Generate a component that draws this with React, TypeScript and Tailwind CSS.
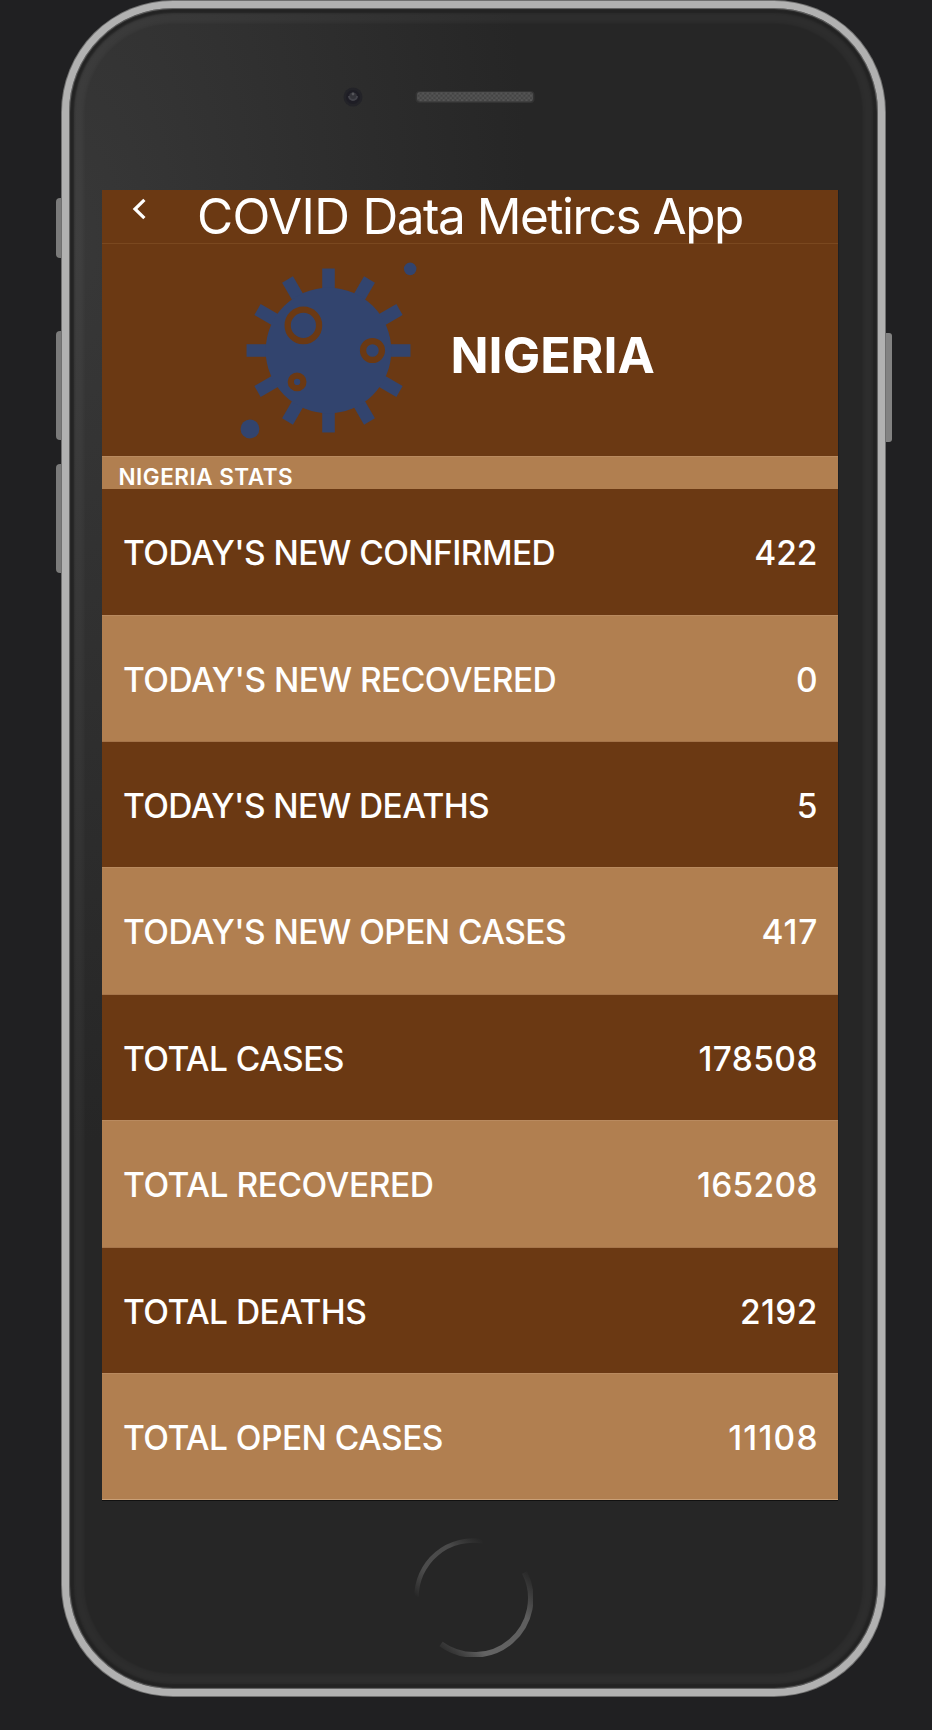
const stats = [
  { label: "TODAY'S NEW CONFIRMED", value: '422', track: 'tracking-[-0.58px]', num: 'tracking-[0px]' },
  { label: "TODAY'S NEW RECOVERED", value: '0', track: 'tracking-[-0.52px]', num: 'tracking-[0px]' },
  { label: "TODAY'S NEW DEATHS", value: '5', track: 'tracking-[-0.6px]', num: 'tracking-[0px]' },
  { label: "TODAY'S NEW OPEN CASES", value: '417', track: 'tracking-[-0.58px]', num: 'tracking-[0.9px] -mr-[0.9px]' },
  { label: 'TOTAL CASES', value: '178508', track: 'tracking-[-0.56px]', num: 'tracking-[0.4px] -mr-[0.4px]' },
  { label: 'TOTAL RECOVERED', value: '165208', track: 'tracking-[-0.45px]', num: 'tracking-[0.3px] -mr-[0.3px]' },
  { label: 'TOTAL DEATHS', value: '2192', track: 'tracking-[-0.54px]', num: 'tracking-[0.4px] -mr-[0.4px]' },
  { label: 'TOTAL OPEN CASES', value: '11108', track: 'tracking-[-0.55px]', num: 'tracking-[1.2px] -mr-[1.2px]' },
];

const spikes = [0, 30, 60, 90, 120, 150, 180, 210, 240, 270, 300, 330];

function Virus() {
  return (
    <svg viewBox="0 0 32 32" className="h-[201px] w-[201px] shrink-0 fill-[#32446e]">
      {spikes.map((a) => (
        <rect key={a} x="15" y="2.95" width="2" height="5" transform={`rotate(${a} 16 16)`} />
      ))}
      <circle cx="16" cy="16" r="10" />
      <circle cx="12" cy="12" r="2.5" fill="none" stroke="#6b3913" />
      <circle cx="23" cy="16" r="1.5" fill="none" stroke="#6b3913" />
      <circle cx="11" cy="21" r="1" fill="none" stroke="#6b3913" />
      <circle cx="29" cy="3" r="1" />
      <circle cx="3.5" cy="28.5" r="1.5" />
    </svg>
  );
}

function Screen() {
  return (
    <main className="flex h-[1310px] w-[736px] flex-col bg-[#6b3913] text-white shadow-[0_1px_0_#111,1px_0_0_#1d2024]">
      <header className="flex h-[54px] items-start border-b border-[#7a481f]">
        <svg viewBox="0 0 14 22" className="mt-[8px] ml-[30px] h-[22px] w-[14px] shrink-0">
          <path d="M12.4 1.8 3 11l9.4 9.2" fill="none" stroke="white" strokeWidth="3.2" />
        </svg>
        <h1 className="ml-[51px] text-[49.5px] leading-[53px] font-normal tracking-[-1.5px] whitespace-nowrap">
          <span className="tracking-[-0.65px]">COVID </span>Data Metircs App
        </h1>
      </header>
      <section className="flex h-[212px] items-start">
        <div className="mt-[6px] ml-[126px]">
          <Virus />
        </div>
        <h2 className="mt-[80px] ml-[21.5px] text-[50px] leading-[62px] font-bold">NIGERIA</h2>
      </section>
      <div className="h-[33px] border-t border-[#b98a5f] bg-[#b17f50] pl-[16.5px] text-[22.5px] leading-[39px] font-semibold tracking-[0.5px]">
        NIGERIA STATS
      </div>
      <ul className="flex flex-1 flex-col">
        {stats.map((s, i) => (
          <li
            key={s.label}
            className={`flex items-center justify-between border-b pt-[3px] pr-[20.5px] pl-[21px] text-[33.5px] font-medium ${
              i === 0 || i === 3 ? 'h-[127px]' : i < 3 ? 'h-[126px]' : 'flex-1'
            } ${
              i % 2 ? 'border-[#a5744a] bg-[#b17f50] last:border-[#c99f76]' : 'border-[#b98a5f] bg-[#6b3913]'
            }`}
          >
            <span className={s.track}>{s.label}</span>
            <span className={s.num}>{s.value}</span>
          </li>
        ))}
      </ul>
    </main>
  );
}

function SpeakerBar() {
  return (
    <div className="flex h-[182px] w-full pt-[79px]">
      <svg viewBox="0 0 20 20" className="ml-[273.5px] h-[20px] w-[20px]">
        <circle cx="10" cy="10" r="9.5" fill="#232328" />
        <circle cx="10" cy="10" r="7" fill="#1e1d25" />
        <circle cx="10" cy="9.5" r="4" fill="#333339" />
        <path d="M6 9a4 4 0 1 0 8 0" fill="none" stroke="#43434a" strokeWidth="2" />
        <circle cx="10" cy="7" r="1.4" fill="#55555a" />
      </svg>
      <svg viewBox="0 0 120 14" className="mt-[3px] ml-[52px] h-[14px] w-[120px]">
        <defs>
          <pattern id="mesh" width="4.6" height="4.6" patternUnits="userSpaceOnUse">
            <rect width="4.6" height="4.6" fill="#444" />
            <rect width="2.3" height="2.3" fill="#555" />
            <rect x="2.3" y="2.3" width="2.3" height="2.3" fill="#555" />
          </pattern>
        </defs>
        <rect x="0.5" y="1" width="119" height="12" rx="4" fill="#333" />
        <rect x="2" y="2" width="116" height="9.5" rx="3" fill="url(#mesh)" />
      </svg>
    </div>
  );
}

function HomeButton() {
  return (
    <svg viewBox="0 0 120 120" className="mt-[37px] h-[120px] w-[120px]">
      <defs>
        <linearGradient id="arcTop" x1="0" y1="1" x2="1" y2="0">
          <stop offset="0" stopColor="#555" stopOpacity="0" />
          <stop offset="0.3" stopColor="#4c4c4c" />
          <stop offset="0.7" stopColor="#4a4a4a" />
          <stop offset="1" stopColor="#444" stopOpacity="0" />
        </linearGradient>
        <linearGradient id="arcBottom" x1="0" y1="1" x2="1" y2="0">
          <stop offset="0" stopColor="#555" stopOpacity="0" />
          <stop offset="0.25" stopColor="#646464" />
          <stop offset="0.7" stopColor="#5e5e5e" />
          <stop offset="1" stopColor="#555" stopOpacity="0" />
        </linearGradient>
      </defs>
      <path d="M3.5 60A56.5 56.5 0 0 1 70 4.4" fill="none" stroke="url(#arcTop)" strokeWidth="4.5" />
      <path d="M28 107A56.5 56.5 0 0 0 111.5 35.5" fill="none" stroke="url(#arcBottom)" strokeWidth="5.5" />
    </svg>
  );
}

export default function App() {
  return (
    <div className="flex h-[1730px] w-[932px] bg-[#202022] pl-[61px] font-[Inter,sans-serif]">
      <div className="relative h-[1697px] w-[825px]">
        <i className="absolute top-[198px] -left-[5px] h-[60px] w-[7px] rounded-l-[4px] bg-[#7b7b7b]" />
        <i className="absolute top-[331px] -left-[5px] h-[109px] w-[7px] rounded-l-[4px] bg-[#7b7b7b]" />
        <i className="absolute top-[464px] -left-[5px] h-[109px] w-[7px] rounded-l-[4px] bg-[#7b7b7b]" />
        <i className="absolute top-[333px] -right-[6px] h-[109px] w-[7px] rounded-r-[3px] bg-[#828282]" />
        <div className="relative h-full rounded-[112px] bg-[#707070] p-px">
          <div className="flex h-full flex-col rounded-[111px] border-[7px] border-[#b1b1b1] bg-[#262626] bg-[radial-gradient(ellipse_460px_900px_at_0_14%,#383838_0%,#303030_45%,#262626_100%)] shadow-[inset_0_0_1px_1px_#6a6a6a,inset_0_0_2px_5px_#232323,inset_0_0_3px_15px_rgba(255,255,255,0.035)]">
            <SpeakerBar />
            <div className="ml-[33px] flex">
              <Screen />
            </div>
            <div className="ml-[344px] flex">
              <HomeButton />
            </div>
          </div>
        </div>
      </div>
    </div>
  );
}
